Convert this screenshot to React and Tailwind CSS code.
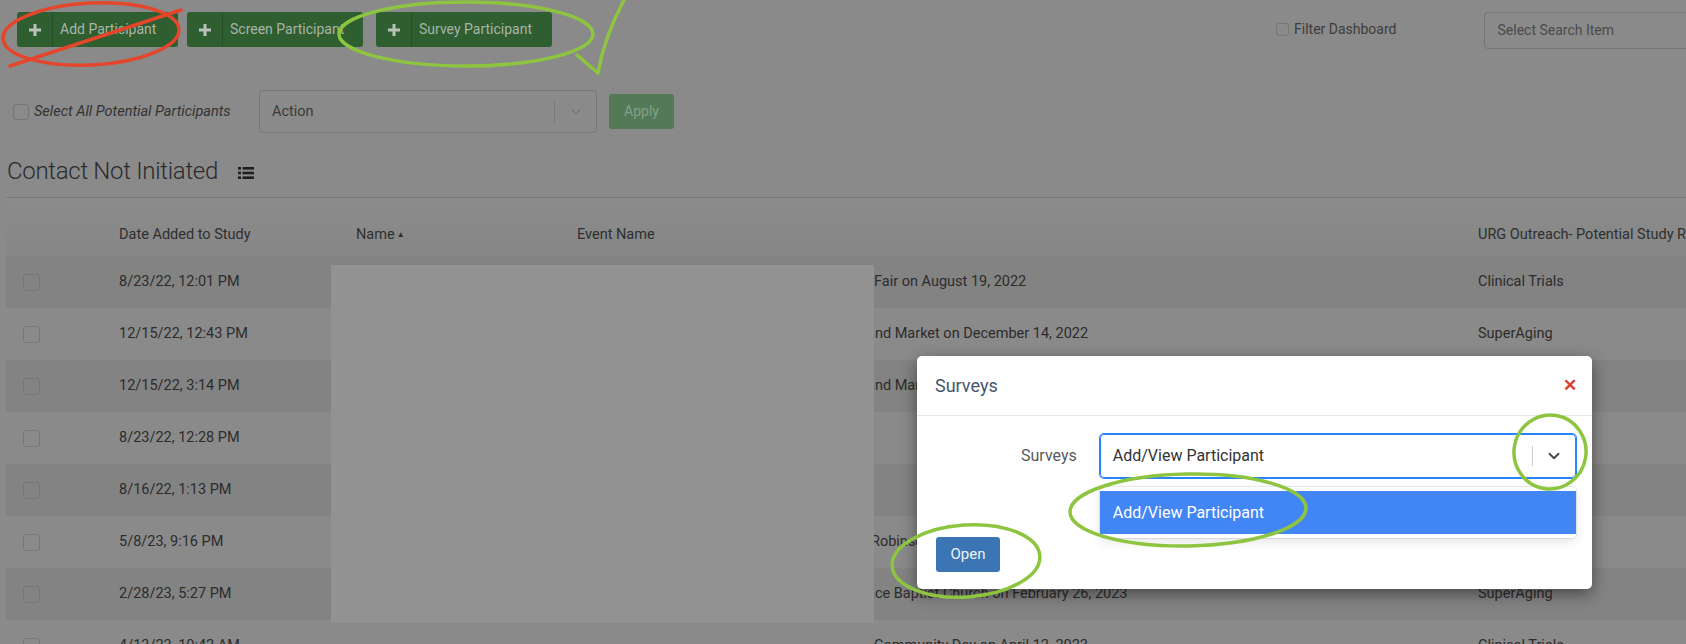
import { ChevronDown } from 'lucide-react';

// Modal "Surveys" over the Contact Not Initiated dashboard (backdrop dimmed)

const rows = [
  { date: '8/23/22, 12:01 PM', event: 'Fair on August 19, 2022', evPad: 'pl-[297px]', urg: 'Clinical Trials', dark: true },
  { date: '12/15/22, 12:43 PM', event: 'and Market on December 14, 2022', evPad: 'pl-[290px]', urg: 'SuperAging', dark: false },
  { date: '12/15/22, 3:14 PM', event: 'and Market on December 14, 2022', evPad: 'pl-[290px]', urg: 'SuperAging', dark: true },
  { date: '8/23/22, 12:28 PM', event: '', evPad: 'pl-[297px]', urg: 'Clinical Trials', dark: false },
  { date: '8/16/22, 1:13 PM', event: '', evPad: 'pl-[297px]', urg: 'SuperAging', dark: true },
  { date: '5/8/23, 9:16 PM', event: 'Robinson Park Health Fair on May 6, 2023', evPad: 'pl-[294px]', urg: 'Clinical Trials', dark: false },
  { date: '2/28/23, 5:27 PM', event: 'ace Baptist Church on February 26, 2023', evPad: 'pl-[290px]', urg: 'SuperAging', dark: true },
  { date: '4/13/23, 10:42 AM', event: 'Community Day on April 12, 2023', evPad: 'pl-[297px]', urg: 'Clinical Trials', dark: false },
];

const PlusIcon = () => (
  <svg width="12" height="12" viewBox="0 0 12 12">
    <rect x="4.5" y="0" width="3" height="12" fill="#b8c2b8" />
    <rect x="0" y="4.5" width="12" height="3" fill="#b8c2b8" />
  </svg>
);

const GreenButton = ({ label, width, className = '' }) => (
  <div className={`flex h-[35px] shrink-0 rounded-[3px] bg-[#2f5e31] ${width} ${className}`}>
    <div className="flex w-[36px] shrink-0 items-center justify-center border-r border-[#27502a]">
      <PlusIcon />
    </div>
    <div className="flex items-center whitespace-nowrap pl-[7px] text-[14px] text-[#a9b4a9]">{label}</div>
  </div>
);

const Checkbox = ({ size = 'w-[17px] h-[17px]' }) => (
  <div className={`${size} shrink-0 rounded-[3px] border border-[#767676]`} />
);

const ListIcon = () => (
  <svg width="16" height="12" viewBox="0 0 16 12" fill="#1e1e1e">
    <rect x="0" y="0" width="3" height="2.6" />
    <rect x="4.5" y="0" width="11.5" height="2.6" />
    <rect x="0" y="4.7" width="3" height="2.6" />
    <rect x="4.5" y="4.7" width="11.5" height="2.6" />
    <rect x="0" y="9.4" width="3" height="2.6" />
    <rect x="4.5" y="9.4" width="11.5" height="2.6" />
  </svg>
);

const Annotations = () => (
  <svg className="pointer-events-none absolute left-0 top-0 z-30" width="1686" height="644" viewBox="0 0 1686 644" fill="none">
    {/* red: add participant crossed out */}
    <ellipse cx="91" cy="34" rx="88" ry="31" stroke="#e4462b" strokeWidth="3.5" transform="rotate(-3 91 34)" />
    <path d="M10 66 L181 10" stroke="#e4462b" strokeWidth="3.5" strokeLinecap="round" />
    {/* green: survey participant */}
    <ellipse cx="466" cy="34" rx="127" ry="32" stroke="#8dc541" strokeWidth="3.5" />
    <path d="M577 55 L598 73 Q604 38 624 0" stroke="#8dc541" strokeWidth="3.5" strokeLinecap="round" strokeLinejoin="round" />
    {/* green: chevron, option, open */}
    <ellipse cx="1550" cy="452" rx="36" ry="37" stroke="#8dc541" strokeWidth="3.5" transform="rotate(10 1550 452)" />
    <ellipse cx="1188" cy="510" rx="118" ry="36" stroke="#8dc541" strokeWidth="3.5" transform="rotate(-1 1188 510)" />
    <ellipse cx="966" cy="561" rx="74" ry="36" stroke="#8dc541" strokeWidth="3.5" transform="rotate(-4 966 561)" />
  </svg>
);

const SurveysModal = () => (
  <div className="absolute left-[917px] top-[356px] z-20 h-[233px] w-[675px] rounded-[5px] bg-white shadow-[0_5px_16px_rgba(0,0,0,0.45)]">
    <div className="flex h-[60px] items-center justify-between border-b border-[#e6e6e6] pl-[18px] pr-[15px]">
      <span className="text-[18px] text-[#46556b]">Surveys</span>
      <span className="text-[17px] font-bold leading-none text-[#d9432e]">✕</span>
    </div>
    <div className="flex items-center pt-[18px]">
      <div className="pl-[104px] text-[16px] text-[#5a5a5a]">Surveys</div>
      <div className="relative ml-[23px] w-[476px]">
        <div className="flex h-[44px] items-center rounded-[4px] border border-[#2684ff] shadow-[0_0_0_1px_#2684ff]">
          <span className="flex-1 pl-[12px] text-[16px] text-[#333]">Add/View Participant</span>
          <span className="h-[20px] w-px bg-[#cccccc]" />
          <span className="flex w-[42px] items-center justify-center text-[#444]">
            <ChevronDown size={18} strokeWidth={2.4} />
          </span>
        </div>
        <div className="absolute left-0 top-[53px] w-full rounded-[4px] bg-white py-[4px] shadow-[0_0_0_1px_rgba(0,0,0,0.08),0_4px_11px_rgba(0,0,0,0.1)]">
          <div className="flex h-[43px] items-center bg-[#4285f4] pl-[13px] text-[16px] text-white">Add/View Participant</div>
        </div>
      </div>
    </div>
    <div className="ml-[19px] mt-[59px] flex h-[35px] w-[64px] items-center justify-center rounded-[3px] bg-[#3c75b4] text-[15px] text-[#eef3f8]">
      Open
    </div>
  </div>
);

export default function App() {
  return (
    <div className="relative h-[644px] w-[1686px] overflow-hidden bg-[#8a8a8a] font-['Roboto',sans-serif] text-[#2c2c2c]">
      {/* top toolbar */}
      <div className="flex items-start pl-[17px] pt-[12px]">
        <GreenButton label="Add Participant" width="w-[161px]" />
        <GreenButton label="Screen Participant" width="w-[176px]" className="ml-[9px]" />
        <GreenButton label="Survey Participant" width="w-[176px]" className="ml-[13px]" />
        <div className="ml-[724px] mt-[7px] flex shrink-0 items-center whitespace-nowrap">
          <Checkbox size="w-[13px] h-[13px]" />
          <span className="ml-[5px] text-[14px] text-[#3d3d3d]">Filter Dashboard</span>
        </div>
        <div className="ml-[88px] flex h-[37px] w-[260px] shrink-0 items-center whitespace-nowrap rounded-[4px] border border-[#767676] pl-[12px] text-[14px] text-[#4a4a4a]">
          Select Search Item
        </div>
      </div>

      {/* bulk actions */}
      <div className="mt-[41px] flex items-center pl-[13px]">
        <Checkbox size="w-[16px] h-[16px]" />
        <span className="ml-[5px] w-[196px] shrink-0 whitespace-nowrap text-[14.5px] italic text-[#333]">Select All Potential Participants</span>
        <div className="ml-[29px] flex h-[43px] w-[338px] shrink-0 items-center rounded-[4px] border border-[#767676]">
          <span className="flex-1 pl-[12px] text-[14.5px] text-[#3a3a3a]">Action</span>
          <span className="h-[22px] w-px bg-[#7a7a7a]" />
          <span className="flex w-[41px] items-center justify-center text-[#6a6a6a]">
            <ChevronDown size={16} strokeWidth={1.5} />
          </span>
        </div>
        <div className="ml-[12px] flex h-[35px] w-[65px] shrink-0 items-center justify-center rounded-[3px] bg-[#537956] text-[14px] text-[#87a089]">
          Apply
        </div>
      </div>

      {/* section title */}
      <div className="ml-[7px] mt-[20px] flex h-[36px] items-center">
        <span className="text-[24px] font-light tracking-[-0.3px] text-[#2b2b2b]">Contact Not Initiated</span>
        <span className="ml-[20px] mt-[4px]">
          <ListIcon />
        </span>
      </div>

      {/* table */}
      <div className="ml-[6px] mt-[8px] border-t border-[#7a7a7a]">
        <div className="flex h-[58px] items-center whitespace-nowrap bg-gradient-to-b from-[#8c8c8c] to-[#868686] pt-[15px] text-[14.5px] text-[#2f2f2f]">
          <div className="w-[113px] shrink-0" />
          <div className="w-[237px] shrink-0">Date Added to Study</div>
          <div className="flex w-[221px] shrink-0 items-center">
            Name<span className="ml-[2px] text-[8px]">▲</span>
          </div>
          <div className="w-[901px] shrink-0">Event Name</div>
          <div className="shrink-0">URG Outreach- Potential Study Recruitment</div>
        </div>
        {rows.map((r) => (
          <div
            key={r.date}
            className={`flex h-[52px] items-center whitespace-nowrap text-[14.5px] ${r.dark ? 'bg-[#838383]' : 'bg-[#8a8a8a]'}`}
          >
            <div className="w-[113px] shrink-0 pl-[17px]">
              <Checkbox />
            </div>
            <div className="w-[237px] shrink-0">{r.date}</div>
            <div className="w-[221px] shrink-0" />
            <div className={`w-[901px] shrink-0 overflow-hidden ${r.evPad}`}>{r.event}</div>
            <div className="shrink-0">{r.urg}</div>
          </div>
        ))}
      </div>

      {/* redacted names */}
      <div className="absolute left-[331px] top-[265px] z-10 h-[358px] w-[543px] bg-[#929292]" />

      <SurveysModal />
      <Annotations />
    </div>
  );
}
